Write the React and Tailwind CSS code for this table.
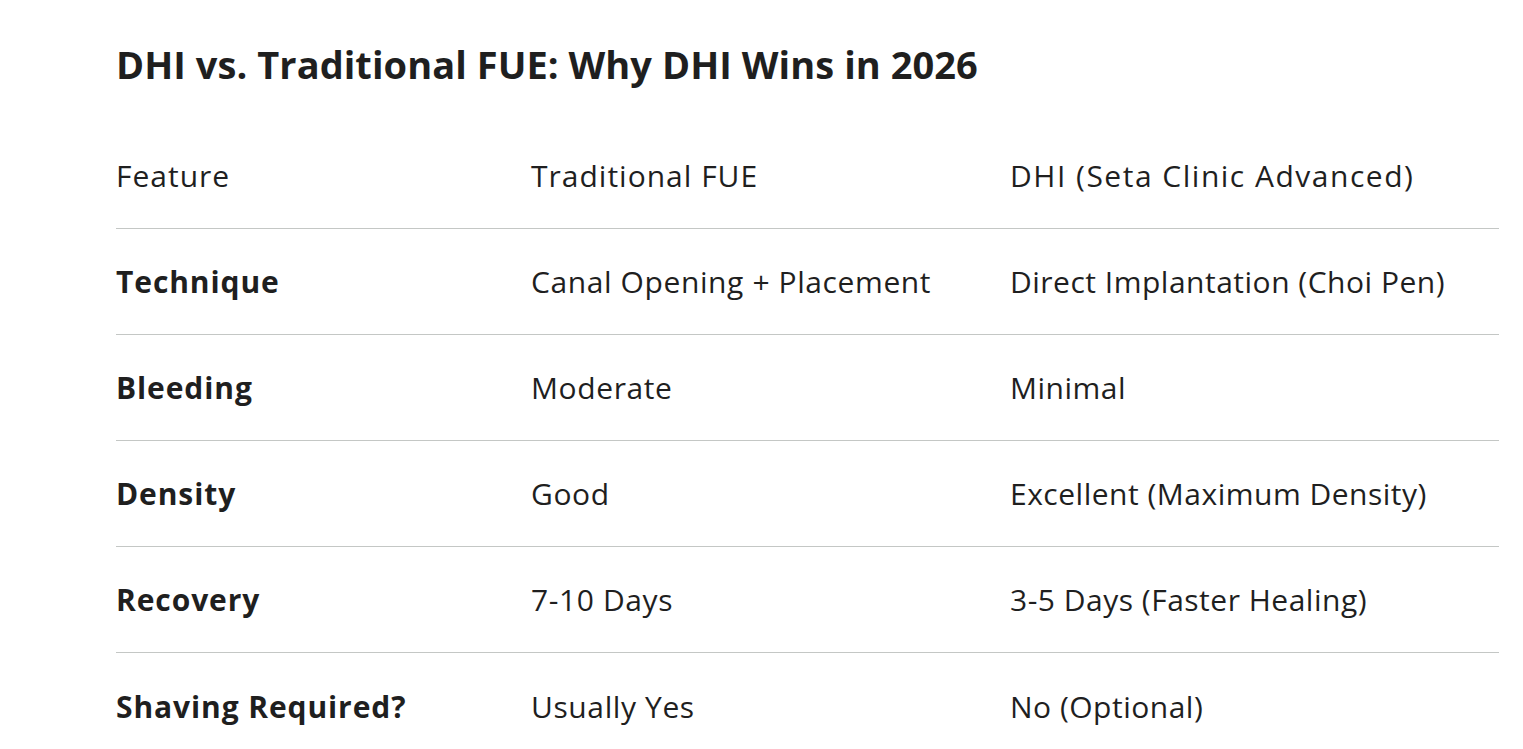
export default function App() {
  const rows = [
    ["Technique", "Canal Opening + Placement", "Direct Implantation (Choi Pen)"],
    ["Bleeding", "Moderate", "Minimal"],
    ["Density", "Good", "Excellent (Maximum Density)"],
    ["Recovery", "7-10 Days", "3-5 Days (Faster Healing)"],
    ["Shaving Required?", "Usually Yes", "No (Optional)"],
  ];
  return (
    <div className="min-h-screen bg-white text-[#1f1f1f] pl-[116px] pt-[39px]" style={{ fontFamily: "'Open Sans', Roboto, sans-serif" }}>
      <h1 className="text-[38px] font-bold leading-[50px] tracking-[0.05px]">DHI vs. Traditional FUE: Why DHI Wins in 2026</h1>
      <div className="w-[1383px] mt-[34px] text-[30px]">
        <div className="grid grid-cols-[415px_479px_1fr] h-[106px] items-center border-b border-[#c4c7c5] font-medium tracking-[1px]">
          <div>Feature</div>
          <div>Traditional FUE</div>
          <div className="tracking-[1.5px]">DHI (Seta Clinic Advanced)</div>
        </div>
        {rows.map((r, i) => (
          <div key={i} className={`grid grid-cols-[415px_479px_1fr] h-[106px] items-center ${i < rows.length - 1 ? "border-b border-[#c4c7c5]" : ""}`}>
            <div className="font-bold tracking-[0.9px]">{r[0]}</div>
            <div className="tracking-[0.6px]">{r[1]}</div>
            <div className="tracking-[0.5px]">{r[2]}</div>
          </div>
        ))}
      </div>
    </div>
  );
}
